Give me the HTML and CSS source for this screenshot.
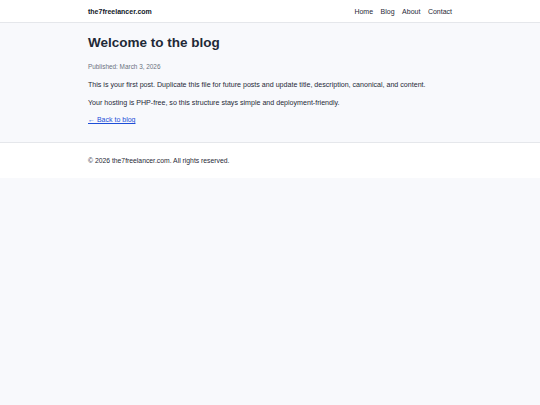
FILE: index.html
```html
<!DOCTYPE html>
<html lang="en">
<head>
<meta charset="utf-8">
<title>Welcome to the blog</title>
<link rel="stylesheet" href="styles.css">
</head>
<body>
<header class="site-header">
  <div class="container header-inner">
    <a class="brand" href="#">the7freelancer.com</a>
    <nav class="nav">
      <a href="#">Home</a>
      <a href="#">Blog</a>
      <a href="#">About</a>
      <a href="#">Contact</a>
    </nav>
  </div>
</header>
<main class="site-main">
  <article class="container post">
    <h1 class="post-title">Welcome to the blog</h1>
    <p class="post-meta">Published: March 3, 2026</p>
    <p>This is your first post. Duplicate this file for future posts and update title, description, canonical, and content.</p>
    <p>Your hosting is PHP-free, so this structure stays simple and deployment-friendly.</p>
    <p><a class="back-link" href="#">← Back to blog</a></p>
  </article>
</main>
<footer class="site-footer">
  <div class="container">
    <p class="footer-text">© 2026 the7freelancer.com. All rights reserved.</p>
  </div>
</footer>
</body>
</html>
```
FILE: styles.css
```css
* { box-sizing: border-box; }
html, body { margin: 0; padding: 0; }
body {
  background: #f8f9fc;
  color: #1f2937;
  font-family: "Liberation Sans", Arial, sans-serif;
  font-size: 7px;
  line-height: 10px;
}
a { color: inherit; text-decoration: none; }
.container {
  max-width: 364px;
  margin: 0 auto;
}
.site-header {
  background: #ffffff;
  border-bottom: 1px solid #e5e7eb;
}
.header-inner {
  display: flex;
  align-items: center;
  justify-content: space-between;
  padding: 6.5px 0;
  line-height: 9px;
}
.brand {
  font-weight: 700;
  color: #111827;
}
.nav {
  display: flex;
  gap: 7.5px;
}
.nav a { color: #1f2937; }
.site-main {
  border-bottom: 1px solid #e5e7eb;
}
.post {
  padding: 11.6px 0 17px;
}
.post p {
  margin: 0 0 7.7px;
  font-size: 7.1px;
  line-height: 10px;
}
.post p:last-child { margin-bottom: 0; }
.post-title {
  margin: 0 0 11.4px;
  font-size: 13.5px;
  line-height: 16px;
  font-weight: 700;
  color: #1f2937;
}
.post .post-meta {
  margin: 0 0 8px;
  font-size: 6.4px;
  color: #6b7280;
}
.post .back-link {
  font-size: 7px;
  color: #1d4ed8;
  text-decoration: underline;
}
.site-footer {
  background: #ffffff;
}
.footer-text {
  margin: 0;
  padding: 12.5px 0;
  font-size: 6.8px;
  line-height: 10px;
}
```
